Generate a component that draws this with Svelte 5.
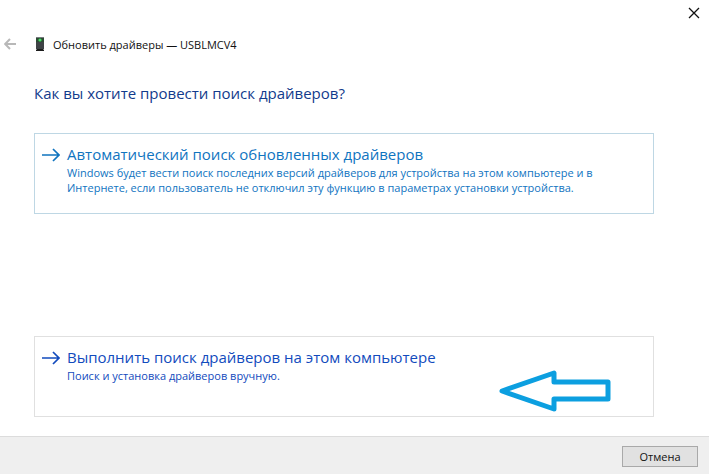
<script lang="ts">
  interface Option {
    id: string;
    title: string;
    lines: string[];
    marked?: boolean;
  }

  const device = 'USBLMCV4';

  const options: Option[] = [
    {
      id: 'auto',
      title: 'Автоматический поиск обновленных драйверов',
      lines: [
        'Windows будет вести поиск последних версий драйверов для устройства на этом компьютере и в',
        'Интернете, если пользователь не отключил эту функцию в параметрах установки устройства.'
      ]
    },
    {
      id: 'manual',
      title: 'Выполнить поиск драйверов на этом компьютере',
      lines: ['Поиск и установка драйверов вручную.'],
      marked: true
    }
  ];
</script>

<div class="wizard">
  <div class="titlebar">
    <button class="close" type="button" aria-label="Закрыть">
      <svg width="12" height="12" viewBox="0 0 12 12" fill="none" stroke="#111" stroke-width="1.3">
        <path d="M1 1l10 10M11 1L1 11" />
      </svg>
    </button>
  </div>

  <header class="header">
    <button class="back" type="button" aria-label="Назад" disabled>
      <svg width="13" height="12" viewBox="0 0 13 12" fill="none" stroke="#b8b8b8" stroke-width="2">
        <path d="M12 6H1.5M6 1L1.2 6L6 11" />
      </svg>
    </button>
    <svg class="device" width="10" height="16" viewBox="0 0 10 16" aria-hidden="true">
      <path d="M1 1h8v12H1z" fill="#3f4346" />
      <path d="M1 1h8v1H1z" fill="#777b7e" />
      <path d="M1 2h8v4H1z" fill="#2c4a33" />
      <path d="M2 13h6l1 1v1H1v-1z" fill="#1c1c1c" />
      <circle cx="5" cy="4" r="1.6" fill="#46e065" />
    </svg>
    <span class="caption">Обновить драйверы — {device}</span>
  </header>

  <main class="content">
    <h1>Как вы хотите провести поиск драйверов?</h1>

    <div class="options">
      {#each options as option (option.id)}
        <button class="option {option.id}" type="button">
          <svg class="arrow" width="18" height="14" viewBox="0 0 18 14" fill="none" stroke="currentColor" stroke-width="1.7">
            <path d="M0 7h17M11 1l6 6l-6 6" />
          </svg>
          <span class="text">
            <span class="title">{option.title}</span>
            {#each option.lines as line}
              <span class="line">{line}</span>
            {/each}
          </span>
          {#if option.marked}
            <svg class="pointer" width="112" height="42" viewBox="0 0 112 42" aria-hidden="true">
              <path d="M3 21L55 3v9h54v17H55v10z" fill="#fff" stroke="#0c9fe0" stroke-width="5" stroke-linejoin="round" />
            </svg>
          {/if}
        </button>
      {/each}
    </div>
  </main>

  <footer class="footer">
    <button class="cancel" type="button">Отмена</button>
  </footer>
</div>

<style>
  :global(body) {
    margin: 0;
    background: #fff;
  }

  .wizard {
    display: flex;
    flex-direction: column;
    min-height: 100vh;
    font-family: 'Open Sans', 'Noto Sans', sans-serif;
    font-size: 11px;
    color: #111;
  }

  button {
    font: inherit;
    border: none;
    background: none;
    padding: 0;
  }

  svg {
    display: block;
    flex: none;
  }

  .titlebar {
    display: flex;
    justify-content: flex-end;
    height: 26px;
  }

  .close {
    padding: 0 9px;
  }

  .header {
    display: flex;
    align-items: center;
    height: 36px;
    padding-left: 4px;
  }

  .device {
    margin: 0 8px 0 18px;
  }

  .content {
    display: flex;
    flex: 1;
    flex-direction: column;
    padding: 19px 55px 19px 34px;
  }

  h1 {
    margin: 0;
    font-size: 15px;
    font-weight: 400;
    line-height: 24px;
    color: #123b8c;
  }

  .options {
    display: flex;
    flex: 1;
    flex-direction: column;
    justify-content: space-between;
    gap: 16px;
    padding-top: 28px;
  }

  .option {
    position: relative;
    display: flex;
    align-items: flex-start;
    gap: 7px;
    min-height: 81px;
    padding: 10px 7px;
    border: 1px solid #e0e0e0;
    text-align: left;
    color: #124bbd;
  }

  .option.auto {
    border-color: #bed7e4;
    color: #1074bf;
  }

  .arrow {
    margin-top: 4px;
  }

  .text {
    display: flex;
    flex-direction: column;
  }

  .title {
    margin-bottom: 1px;
    font-size: 15px;
    line-height: 20px;
  }

  .line {
    line-height: 15px;
  }

  .pointer {
    position: absolute;
    right: 42px;
    bottom: 4px;
  }

  .footer {
    display: flex;
    justify-content: flex-end;
    padding: 9px 11px 7px;
    border-top: 1px solid #dcdcdc;
    background: #efefef;
  }

  .cancel {
    width: 76px;
    height: 21px;
    border: 1px solid #a9a9a9;
    background: #e1e1e1;
    line-height: 19px;
    color: #111;
  }
</style>
